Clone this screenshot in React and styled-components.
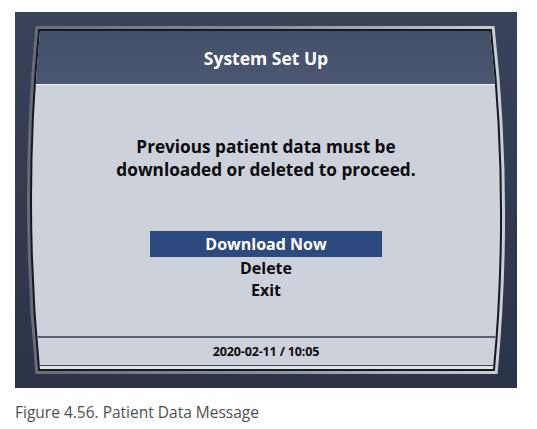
import React from 'react'
import styled, { createGlobalStyle } from 'styled-components'

const GlobalStyle = createGlobalStyle`
  html, body {
    margin: 0;
    padding: 0;
    background: #ffffff;
  }
  body {
    font-family: "Open Sans", "Noto Sans", sans-serif;
  }
`

const Page = styled.div`
  width: 537px;
  height: 429px;
  padding: 12px 0 0 15px;
  box-sizing: border-box;
`

const Frame = styled.div`
  width: 502px;
  height: 376px;
  box-sizing: border-box;
  padding: 19px 0 0 12px;
  background: linear-gradient(180deg, #39445b 0%, #323c52 40%, #2b3347 100%);
`

const Screen = styled.div`
  position: relative;
  width: 478px;
  height: 338px;
`

const Bezel = styled.svg`
  position: absolute;
  left: 0;
  top: 0;
  overflow: visible;
`

const Display = styled.div`
  position: relative;
  height: 100%;
  display: flex;
  flex-direction: column;
  clip-path: path('M 13 0 L 463 0 Q 481.5 169 466 338 L 13 338 Q -3 169 13 0 Z');
  background: #cdd1da;
  font-family: "Open Sans", "Noto Sans", sans-serif;
  font-weight: 700;
  color: #0b0b0d;
`

const Header = styled.div`
  height: 53px;
  display: flex;
  align-items: center;
  justify-content: center;
  background: linear-gradient(180deg, #44506a 0%, #4b5770 100%);
  border-bottom: 1px solid #eef0f3;
  color: #ffffff;
  font-size: 17.5px;
`

const Body = styled.div`
  flex: 1;
  display: flex;
  flex-direction: column;
  align-items: center;
  padding-top: 50px;
`

const Message = styled.div`
  text-align: center;
  font-size: 17.2px;
  line-height: 23px;
`

const Menu = styled.div`
  margin-top: 50px;
  display: flex;
  flex-direction: column;
  align-items: center;
`

const MenuItem = styled.div`
  width: 232px;
  text-align: center;
  font-size: 16px;
  line-height: 22px;
  padding: ${({ $active }) => ($active ? '2px 0' : '0')};
  background: ${({ $active }) => ($active ? '#2d4a80' : 'transparent')};
  color: ${({ $active }) => ($active ? '#ffffff' : '#0b0b0d')};
`

const Footer = styled.div`
  height: 30px;
  box-sizing: border-box;
  border-top: 2px solid #5b6272;
  border-bottom: 1px solid #3c4250;
  display: flex;
  align-items: center;
  justify-content: center;
  font-size: 12.5px;
  letter-spacing: -0.15px;
`

const BottomLip = styled.div`
  height: 3px;
  background: #e1e4e9;
`

const Caption = styled.div`
  margin-top: 13px;
  font-family: "Open Sans", "Noto Sans", sans-serif;
  font-size: 15.5px;
  color: #505050;
`

const shape = 'M 13 0 L 463 0 Q 481.5 169 466 338 L 13 338 Q -3 169 13 0 Z'

const menu = [
  { label: 'Download Now', active: true },
  { label: 'Delete' },
  { label: 'Exit' },
]

export default function App() {
  return (
    <Page>
      <GlobalStyle />
      <Frame>
        <Screen>
          <Bezel width="478" height="338" viewBox="0 0 478 338">
            <defs>
              <linearGradient id="rim" x1="0" y1="0" x2="1" y2="0">
                <stop offset="0" stopColor="#676c76" />
                <stop offset="0.5" stopColor="#8a8f99" />
                <stop offset="1" stopColor="#c9cdd4" />
              </linearGradient>
            </defs>
            <path d={shape} fill="none" stroke="url(#rim)" strokeWidth="10" strokeLinejoin="miter" />
            <path d={shape} fill="none" stroke="#15181f" strokeWidth="4" />
          </Bezel>
          <Display>
            <Header>System Set Up</Header>
            <Body>
              <Message>
                Previous patient data must be
                <br />
                downloaded or deleted to proceed.
              </Message>
              <Menu>
                {menu.map((m) => (
                  <MenuItem key={m.label} $active={m.active}>
                    {m.label}
                  </MenuItem>
                ))}
              </Menu>
            </Body>
            <Footer>2020-02-11 / 10:05</Footer>
            <BottomLip />
          </Display>
        </Screen>
      </Frame>
      <Caption>Figure 4.56. Patient Data Message</Caption>
    </Page>
  )
}
